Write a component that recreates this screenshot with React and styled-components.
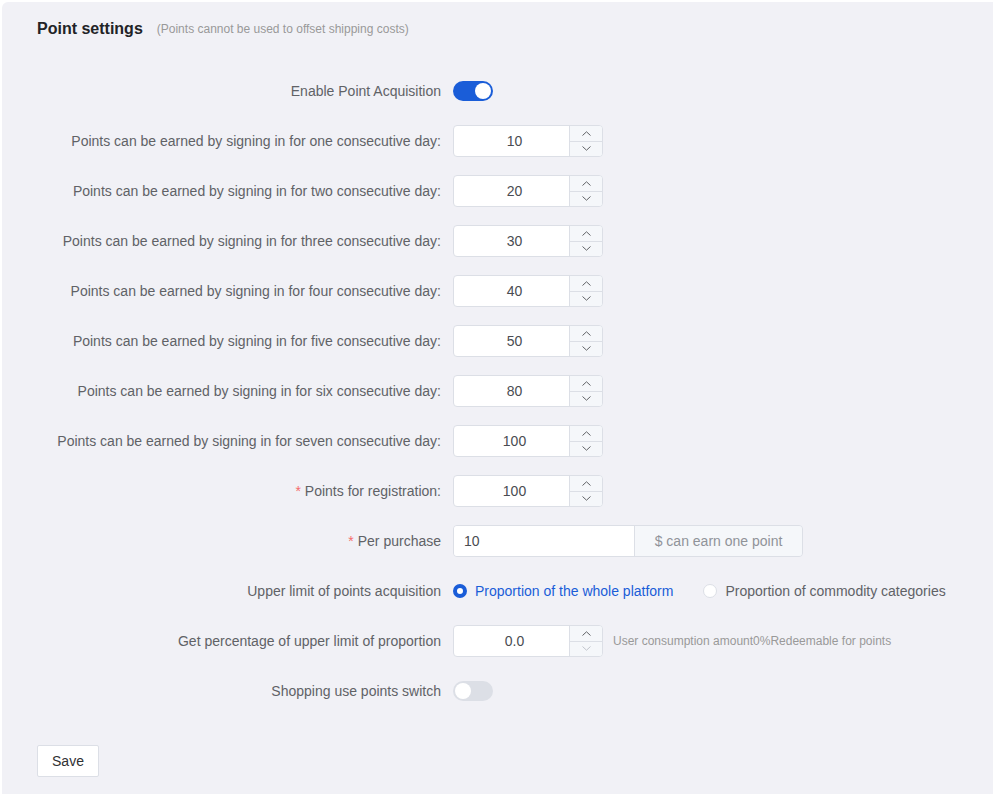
import React from 'react';
import styled, {createGlobalStyle} from 'styled-components';

const GlobalStyle = createGlobalStyle`
  html, body {
    margin: 0;
    padding: 0;
    background: #ffffff;
    font-family: "Liberation Sans", Arial, sans-serif;
  }
`

const Page = styled.div`
  padding: 2px 0 0 2px;
  min-height: 100vh;
  box-sizing: border-box;
`

const Panel = styled.div`
  background: #f1f1f6;
  border-radius: 6px 0 0 0;
  padding: 16px 35px 17px;
  min-height: 792px;
  box-sizing: border-box;
`

const Header = styled.div`
  display: flex;
  align-items: center;
  height: 22px;
  margin-bottom: 35px;
`

const Title = styled.h2`
  margin: 0;
  font-size: 16px;
  font-weight: bold;
  color: #222326;
  line-height: 22px;
`

const SubTitle = styled.span`
  margin-left: 14px;
  font-size: 12px;
  color: #999999;
  line-height: 22px;
`

const Form = styled.div`
  display: flex;
  flex-direction: column;
`

const FormItem = styled.div`
  display: flex;
  align-items: center;
  height: 32px;
  margin-bottom: 18px;
`

const Label = styled.label`
  width: 416px;
  padding-right: 12px;
  box-sizing: border-box;
  text-align: right;
  font-size: 14px;
  color: #606266;
  line-height: 32px;
  white-space: nowrap;
  flex-shrink: 0;
`

const Star = styled.span`
  color: #f56c6c;
  margin-right: 4px;
`

const Content = styled.div`
  display: flex;
  align-items: center;
`

const SwitchTrack = styled.span`
  position: relative;
  display: inline-block;
  width: 40px;
  height: 20px;
  border-radius: 10px;
  background: ${props => props.on ? '#1a5dd8' : '#dcdfe6'};
`

const SwitchKnob = styled.span`
  position: absolute;
  top: 2px;
  left: ${props => props.on ? '22px' : '2px'};
  width: 16px;
  height: 16px;
  border-radius: 50%;
  background: #ffffff;
`

const NumberBox = styled.div`
  display: flex;
  width: 150px;
  height: 32px;
  box-sizing: border-box;
  border: 1px solid #dcdfe6;
  border-radius: 4px;
  background: #ffffff;
  overflow: hidden;
`

const NumberValue = styled.div`
  flex: 1;
  padding: 0 12px 0 18px;
  text-align: center;
  font-size: 14px;
  color: #4a4c52;
  line-height: 30px;
`

const Controls = styled.div`
  width: 32px;
  display: flex;
  flex-direction: column;
  border-left: 1px solid #dcdfe6;
  background: #f5f7fa;
`

const ControlBtn = styled.div`
  flex: 1;
  display: flex;
  align-items: center;
  justify-content: center;
  color: ${props => props.disabled ? '#c0c4cc' : '#606266'};
  & + & {
    border-top: 1px solid #dcdfe6;
  }
`

const TextGroup = styled.div`
  display: flex;
  width: 350px;
  height: 32px;
  box-sizing: border-box;
  border: 1px solid #dcdfe6;
  border-radius: 4px;
  overflow: hidden;
`

const TextValue = styled.div`
  flex: 1;
  background: #ffffff;
  padding: 0 10px;
  font-size: 14px;
  color: #4a4c52;
  line-height: 30px;
`

const Append = styled.div`
  width: 167px;
  border-left: 1px solid #dcdfe6;
  background: #f5f7fa;
  text-align: center;
  font-size: 14px;
  color: #909399;
  line-height: 30px;
`

const RadioOption = styled.label`
  display: flex;
  align-items: center;
  margin-right: 30px;
  font-size: 14px;
  color: ${props => props.checked ? '#1a5dd8' : '#606266'};
  &:last-child {
    margin-right: 0;
  }
`

const RadioDot = styled.span`
  width: 14px;
  height: 14px;
  box-sizing: border-box;
  border-radius: 50%;
  margin-right: 8px;
  border: ${props => props.checked ? '4px solid #1a5dd8' : '1px solid #dcdfe6'};
  background: #ffffff;
`

const Hint = styled.span`
  margin-left: 10px;
  font-size: 12px;
  color: #999999;
`

const SaveButton = styled.button`
  margin-top: 20px;
  width: 62px;
  height: 32px;
  border: 1px solid #dcdfe6;
  border-radius: 2px;
  background: #ffffff;
  font-family: "Liberation Sans", Arial, sans-serif;
  font-size: 14px;
  color: #303133;
  cursor: pointer;
  padding: 0;
`

const Chevron = ({up}) => (
  <svg width="9" height="5" viewBox="0 0 9 5" fill="none">
    <path d={up ? 'M0.5 4.5L4.5 0.8L8.5 4.5' : 'M0.5 0.5L4.5 4.2L8.5 0.5'} stroke="currentColor" strokeWidth="1"/>
  </svg>
);

const Switch = ({on}) => (
  <SwitchTrack on={on}><SwitchKnob on={on}/></SwitchTrack>
);

const NumberInput = ({value, minDisabled}) => (
  <NumberBox>
    <NumberValue>{value}</NumberValue>
    <Controls>
      <ControlBtn><Chevron up/></ControlBtn>
      <ControlBtn disabled={minDisabled}><Chevron/></ControlBtn>
    </Controls>
  </NumberBox>
);

const signInDays = [
  {day: 'one', points: 10},
  {day: 'two', points: 20},
  {day: 'three', points: 30},
  {day: 'four', points: 40},
  {day: 'five', points: 50},
  {day: 'six', points: 80},
  {day: 'seven', points: 100},
];

export default function App() {
  return (
    <Page>
      <GlobalStyle/>
      <Panel>
        <Header>
          <Title>Point settings</Title>
          <SubTitle>(Points cannot be used to offset shipping costs)</SubTitle>
        </Header>
        <Form>
          <FormItem>
            <Label>Enable Point Acquisition</Label>
            <Content><Switch on/></Content>
          </FormItem>
          {signInDays.map(item =>
            <FormItem key={item.day}>
              <Label>Points can be earned by signing in for {item.day} consecutive day:</Label>
              <Content><NumberInput value={item.points}/></Content>
            </FormItem>
          )}
          <FormItem>
            <Label><Star>*</Star>Points for registration:</Label>
            <Content><NumberInput value={100}/></Content>
          </FormItem>
          <FormItem>
            <Label><Star>*</Star>Per purchase</Label>
            <Content>
              <TextGroup>
                <TextValue>10</TextValue>
                <Append>$ can earn one point</Append>
              </TextGroup>
            </Content>
          </FormItem>
          <FormItem>
            <Label>Upper limit of points acquisition</Label>
            <Content>
              <RadioOption checked><RadioDot checked/>Proportion of the whole platform</RadioOption>
              <RadioOption><RadioDot/>Proportion of commodity categories</RadioOption>
            </Content>
          </FormItem>
          <FormItem>
            <Label>Get percentage of upper limit of proportion</Label>
            <Content>
              <NumberInput value="0.0" minDisabled/>
              <Hint>User consumption amount0%Redeemable for points</Hint>
            </Content>
          </FormItem>
          <FormItem>
            <Label>Shopping use points switch</Label>
            <Content><Switch/></Content>
          </FormItem>
        </Form>
        <SaveButton>Save</SaveButton>
      </Panel>
    </Page>
  );
}
